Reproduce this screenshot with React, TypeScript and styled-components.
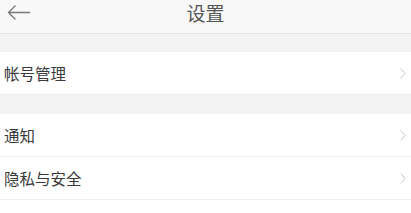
import styled, { createGlobalStyle } from "styled-components";

const GlobalStyle = createGlobalStyle`
  html, body {
    margin: 0;
    padding: 0;
    background: #fff;
    font-family: "Noto Sans CJK SC", "Noto Sans", sans-serif;
  }
`;

const Page = styled.div`
  width: 411px;
  height: 213px;
  overflow: hidden;
  background: #fff;
`;

const Header = styled.div`
  height: 34px;
  display: flex;
  align-items: center;
  justify-content: center;
  position: relative;
  background: #f8f8f8;
  border-bottom: 1px solid #e4e4e4;
  box-sizing: border-box;
  padding-bottom: 9px;
`;

const Back = styled.div`
  position: absolute;
  left: 7px;
  top: 4px;
  width: 24px;
  height: 17px;
  display: flex;
`;

const Title = styled.div`
  font-size: 19px;
  color: #555;
  line-height: 1;
`;

const Gap = styled.div<{ h: number }>`
  height: ${({ h }) => h}px;
  background: #f3f3f3;
`;

const Row = styled.div<{ last?: boolean }>`
  height: 42px;
  display: flex;
  align-items: center;
  justify-content: space-between;
  padding: 0 4px 0 4px;
  background: #fff;
  border-bottom: 1px solid ${({ last }) => (last ? "#f0f0f0" : "#ececec")};
`;

const Label = styled.span`
  font-size: 15.5px;
  color: #3a3a3a;
  letter-spacing: 0;
`;

const Chevron = styled.svg`
  width: 6px;
  height: 11px;
  margin-right: 1px;
`;

const Arrow = () => (
  <svg width="24" height="17" viewBox="0 0 24 17" fill="none">
    <path d="M23 8.5H1.5M8.5 1.5L1.5 8.5L8.5 15.5" stroke="#777" strokeWidth="1.3" />
  </svg>
);

const ChevronIcon = () => (
  <Chevron viewBox="0 0 6 11" fill="none">
    <path d="M0.6 0.6L5.2 5.5L0.6 10.4" stroke="#c4c4c4" strokeWidth="1" />
  </Chevron>
);

const SettingRow = ({ label, last }: { label: string; last?: boolean }) => (
  <Row last={last}>
    <Label>{label}</Label>
    <ChevronIcon />
  </Row>
);

export default function App() {
  return (
    <Page>
      <GlobalStyle />
      <Header>
        <Back>
          <Arrow />
        </Back>
        <Title>设置</Title>
      </Header>
      <Gap h={18} />
      <SettingRow label="帐号管理" />
      <Gap h={19} />
      <SettingRow label="通知" />
      <SettingRow label="隐私与安全" last />
    </Page>
  );
}
